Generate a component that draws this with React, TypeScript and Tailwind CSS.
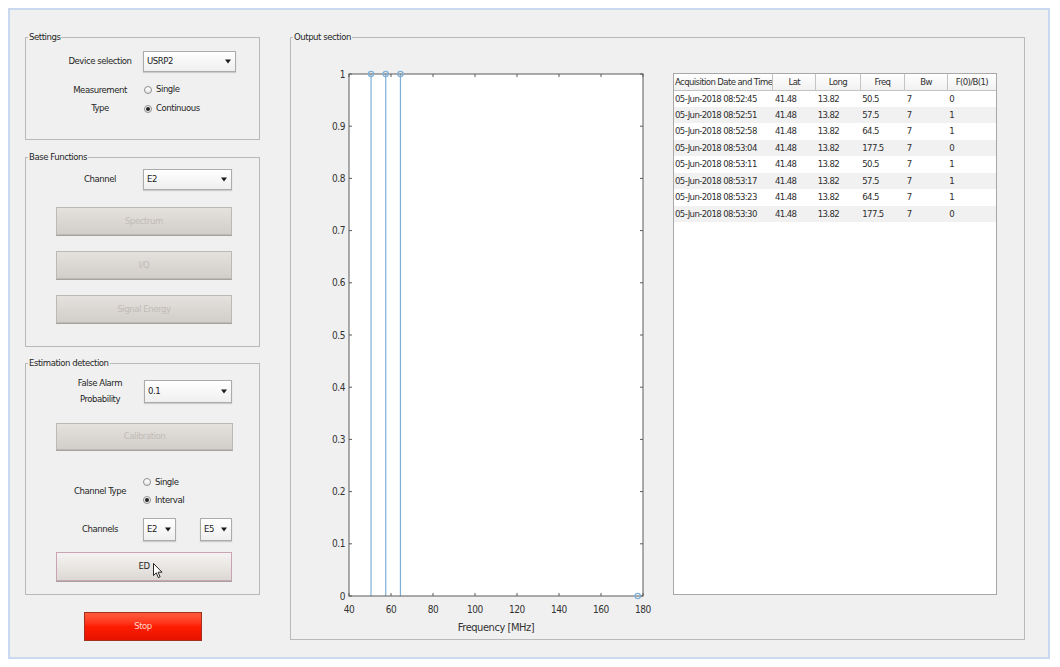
import React from "react";

// MATLAB-style GUI: energy detector front panel with stem plot and acquisition table
const FONT = "font-['DejaVu_Sans_Condensed','Liberation_Sans',sans-serif]";
const SVG_FONT = "'DejaVu Sans Condensed', 'Liberation Sans', sans-serif";

const rows = [
  ["05-Jun-2018 08:52:45", "41.48", "13.82", "50.5", "7", "0"],
  ["05-Jun-2018 08:52:51", "41.48", "13.82", "57.5", "7", "1"],
  ["05-Jun-2018 08:52:58", "41.48", "13.82", "64.5", "7", "1"],
  ["05-Jun-2018 08:53:04", "41.48", "13.82", "177.5", "7", "0"],
  ["05-Jun-2018 08:53:11", "41.48", "13.82", "50.5", "7", "1"],
  ["05-Jun-2018 08:53:17", "41.48", "13.82", "57.5", "7", "1"],
  ["05-Jun-2018 08:53:23", "41.48", "13.82", "64.5", "7", "1"],
  ["05-Jun-2018 08:53:30", "41.48", "13.82", "177.5", "7", "0"],
];

const headers = ["Acquisition Date and Time", "Lat", "Long", "Freq", "Bw", "F(0)/B(1)"];
const colWidths = [99, 43, 45, 45, 43, 49];

function Panel({
  title,
  className = "",
  children,
}: {
  title: string;
  className?: string;
  children?: React.ReactNode;
}) {
  return (
    <fieldset className={`min-w-0 border border-[#b9b9b9] ${className}`}>
      <legend className="ml-[2px] px-[1px] leading-[12px] text-[#262626]">{title}</legend>
      {children}
    </fieldset>
  );
}

function Label({ children, className = "" }: { children: React.ReactNode; className?: string }) {
  return (
    <div className={`w-[117px] shrink-0 pl-[31px] text-center ${className}`}>{children}</div>
  );
}

function Dropdown({ value, className = "" }: { value: string; className?: string }) {
  return (
    <div
      className={`flex shrink-0 items-center justify-between border border-[#ababab] bg-gradient-to-b from-white to-[#efefef] pl-[3px] pr-[4px] shadow-[0_1px_1px_rgba(0,0,0,0.15)] ${className}`}
    >
      <span className="text-[#222]">{value}</span>
      <svg width="6" height="5" viewBox="0 0 6 5">
        <path d="M0 0.5 H6 L3 4.5 Z" fill="#1a1a1a" />
      </svg>
    </div>
  );
}

function Radio({ label, checked = false, className = "" }: { label: string; checked?: boolean; className?: string }) {
  return (
    <div className={`flex items-center gap-[4px] ${className}`}>
      <span className="flex h-[8px] w-[8px] items-center justify-center rounded-full border border-[#8e8e8e] bg-gradient-to-b from-white to-[#e8e8e8]">
        {checked && <span className="h-[4px] w-[4px] rounded-full bg-[#222]" />}
      </span>
      <span className="text-[#262626]">{label}</span>
    </div>
  );
}

function GrayButton({
  children,
  className = "",
}: {
  children: React.ReactNode;
  className?: string;
}) {
  return (
    <div
      className={`ml-[30px] flex w-[176px] items-center justify-center border border-[#bcb8b4] bg-gradient-to-b from-[#e4e1de] to-[#d2ceca] text-[#c0bbb6] shadow-[0_1px_0_#a7a39f] ${className}`}
    >
      {children}
    </div>
  );
}

function Cursor() {
  return (
    <svg
      className="absolute left-[96px] top-[10px]"
      width="10"
      height="16"
      viewBox="0 0 10 16"
    >
      <path
        d="M0.5 0.5 L0.5 12.5 L3.3 9.8 L5.3 14.6 L7.1 13.8 L5.1 9.2 L9 9.2 Z"
        fill="white"
        stroke="#111"
        strokeWidth="0.9"
        strokeLinejoin="round"
      />
    </svg>
  );
}

function StemChart() {
  const left = 58;
  const right = 352;
  const top = 31;
  const bottom = 553;
  const xOf = (f: number) => left + (f - 40) * 2.1;
  const yOf = (v: number) => bottom - v * (bottom - top);
  const xTicks = [40, 60, 80, 100, 120, 140, 160, 180];
  const yTicks = Array.from({ length: 11 }, (_, i) => i / 10);
  const stems = [
    { f: 50.5, v: 1 },
    { f: 57.5, v: 1 },
    { f: 64.5, v: 1 },
    { f: 177.5, v: 0 },
  ];
  const axis = "#5a5a5a";
  const stemColor = "#7fb0d9";

  return (
    <svg width="370" height="597" viewBox="0 0 370 597" className="shrink-0">
      <rect x={left} y={top} width={right - left} height={bottom - top} fill="white" />
      {stems.map((s) => (
        <line
          key={s.f}
          x1={xOf(s.f)}
          x2={xOf(s.f)}
          y1={bottom}
          y2={yOf(s.v)}
          stroke={stemColor}
          strokeWidth="1.2"
        />
      ))}
      <rect
        x={left}
        y={top}
        width={right - left}
        height={bottom - top}
        fill="none"
        stroke={axis}
        strokeWidth="1"
      />
      {yTicks.map((v) => (
        <g key={v}>
          <line x1={left} x2={left + 3} y1={yOf(v)} y2={yOf(v)} stroke={axis} />
          <line x1={right - 3} x2={right} y1={yOf(v)} y2={yOf(v)} stroke={axis} />
          <text
            x={left - 4}
            y={yOf(v) + 3.5}
            textAnchor="end"
            fontSize="10"
            fill="#333"
            fontFamily={SVG_FONT}
          >
            {v === 0 ? "0" : v === 1 ? "1" : v.toFixed(1)}
          </text>
        </g>
      ))}
      {xTicks.map((f) => (
        <g key={f}>
          <line x1={xOf(f)} x2={xOf(f)} y1={bottom} y2={bottom - 3} stroke={axis} />
          <line x1={xOf(f)} x2={xOf(f)} y1={top} y2={top + 3} stroke={axis} />
          <text
            x={xOf(f)}
            y={bottom + 17}
            textAnchor="middle"
            fontSize="10"
            fill="#333"
            fontFamily={SVG_FONT}
          >
            {f}
          </text>
        </g>
      ))}
      {stems.map((s) => (
        <circle
          key={`m${s.f}`}
          cx={xOf(s.f)}
          cy={yOf(s.v)}
          r="2.7"
          fill="none"
          stroke={stemColor}
          strokeWidth="1.2"
        />
      ))}
      <text
        x={(left + right) / 2}
        y={bottom + 35}
        textAnchor="middle"
        fontSize="11"
        fill="#333"
        fontFamily={SVG_FONT}
      >
        Frequency [MHz]
      </text>
    </svg>
  );
}

function ResultsTable() {
  return (
    <div className="ml-[12px] mt-[30px] h-[522px] w-[324px] shrink-0 overflow-hidden border border-[#a8a8a8] bg-white">
      <table className="table-fixed border-collapse whitespace-nowrap text-[9.5px] tracking-[-0.6px] text-[#2e2e2e]">
        <colgroup>
          {colWidths.map((w, i) => (
            <col key={i} style={{ width: w }} />
          ))}
        </colgroup>
        <thead>
          <tr className="h-[16px] bg-gradient-to-b from-white to-[#f1f1f1]">
            {headers.map((h, i) => (
              <th
                key={h}
                className={`overflow-hidden border-b border-[#c4c4c4] p-0 font-normal leading-[15px] ${
                  i === 0 ? "pl-[1px] text-left" : "text-center"
                } ${i < headers.length - 1 ? "border-r" : ""}`}
              >
                {h}
              </th>
            ))}
          </tr>
        </thead>
        <tbody>
          {rows.map((r, i) => (
            <tr key={i} className={`h-[16.5px] ${i % 2 === 1 ? "bg-[#f1f1f1]" : "bg-white"}`}>
              {r.map((c, j) => (
                <td key={j} className={`p-0 leading-[16px] ${j === 0 ? "pl-[1px]" : "pl-[2px]"}`}>
                  {c}
                </td>
              ))}
            </tr>
          ))}
        </tbody>
      </table>
    </div>
  );
}

export default function App() {
  return (
    <div
      className={`h-[667px] w-[1060px] bg-white pl-[8px] pt-[8px] text-[9.5px] tracking-[-0.45px] text-[#262626] ${FONT}`}
    >
      <div className="flex h-[651px] w-[1042px] gap-[30px] border-2 border-[#c9d9f0] bg-[#f0f0f0] pl-[15px] pt-[21px]">
        {/* Left column: controls */}
        <div className="flex w-[235px] shrink-0 flex-col">
          <Panel title="Settings" className="h-[109px]">
            <div className="mt-[8px] flex items-center">
              <Label>Device selection</Label>
              <Dropdown value="USRP2" className="h-[21px] w-[93px]" />
            </div>
            <div className="mt-[8px] flex items-center">
              <Label className="leading-[18px]">
                Measurement
                <br />
                Type
              </Label>
              <div className="flex flex-col pl-[1px]">
                <Radio label="Single" className="h-[19px]" />
                <Radio label="Continuous" checked className="h-[19px]" />
              </div>
            </div>
          </Panel>

          <Panel title="Base Functions" className="mt-[11px] h-[196px]">
            <div className="mt-[6px] flex items-center">
              <Label>Channel</Label>
              <Dropdown value="E2" className="h-[21px] w-[89px]" />
            </div>
            <GrayButton className="mt-[17px] h-[28px]">Spectrum</GrayButton>
            <GrayButton className="mt-[16px] h-[28px]">I/Q</GrayButton>
            <GrayButton className="mt-[16px] h-[28px]">Signal Energy</GrayButton>
          </Panel>

          <Panel title="Estimation detection" className="mt-[10px] h-[238px]">
            <div className="mt-[6px] flex items-center">
              <Label className="leading-[16px]">
                False Alarm
                <br />
                Probability
              </Label>
              <Dropdown value="0.1" className="ml-[1px] h-[23px] w-[88px]" />
            </div>
            <GrayButton className="mt-[16px] h-[27px] w-[177px]">Calibration</GrayButton>
            <div className="mt-[23px] flex items-center">
              <Label>Channel Type</Label>
              <div className="flex flex-col">
                <Radio label="Single" className="h-[18px]" />
                <Radio label="Interval" checked className="h-[18px]" />
              </div>
            </div>
            <div className="mt-[9px] flex items-center">
              <Label>Channels</Label>
              <Dropdown value="E2" className="h-[23px] w-[33px]" />
              <Dropdown value="E5" className="ml-[24px] h-[23px] w-[32px]" />
            </div>
            <div className="relative ml-[30px] mt-[11px] flex h-[29px] w-[176px] items-center justify-center border border-[#c9a2b3] bg-gradient-to-b from-[#f5f3f2] to-[#dcd8d4] text-[#262626] shadow-[0_1px_0_#a7a39f]">
              ED
              <Cursor />
            </div>
          </Panel>

          <div className="ml-[59px] mt-[17px] flex h-[29px] w-[118px] items-center justify-center border border-[#a2301c] bg-gradient-to-b from-[#ff5a3c] via-[#ff1c00] to-[#e41200] text-[#ffd6cb]">
            Stop
          </div>
        </div>

        {/* Right: output section */}
        <Panel title="Output section" className="h-[609px] w-[735px]">
          <div className="flex items-start">
            <StemChart />
            <ResultsTable />
          </div>
        </Panel>
      </div>
    </div>
  );
}
